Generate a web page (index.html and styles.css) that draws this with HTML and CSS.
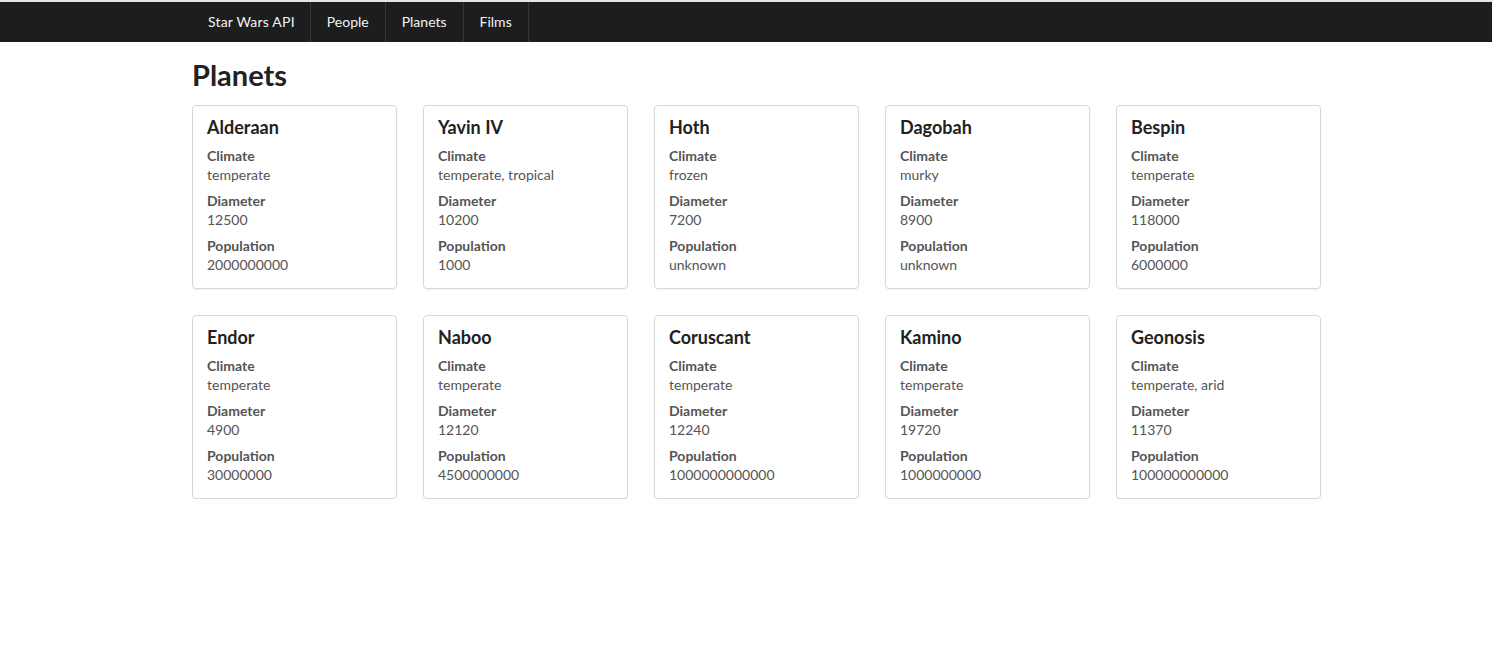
FILE: index.html
```html
<!DOCTYPE html>
<html>
<head>
<meta charset="utf-8">
<link rel="stylesheet" href="styles.css">
</head>
<body>
<nav class="navbar">
  <ul class="nav">
    <li class="brand">Star Wars API</li>
    <li>People</li>
    <li>Planets</li>
    <li>Films</li>
  </ul>
</nav>
<main class="page">
  <h1 class="title">Planets</h1>
  <div class="grid">
    <div class="card"><h3>Alderaan</h3><dl><dt>Climate</dt><dd>temperate</dd><dt>Diameter</dt><dd>12500</dd><dt>Population</dt><dd>2000000000</dd></dl></div>
    <div class="card"><h3>Yavin IV</h3><dl><dt>Climate</dt><dd>temperate, tropical</dd><dt>Diameter</dt><dd>10200</dd><dt>Population</dt><dd>1000</dd></dl></div>
    <div class="card"><h3>Hoth</h3><dl><dt>Climate</dt><dd>frozen</dd><dt>Diameter</dt><dd>7200</dd><dt>Population</dt><dd>unknown</dd></dl></div>
    <div class="card"><h3>Dagobah</h3><dl><dt>Climate</dt><dd>murky</dd><dt>Diameter</dt><dd>8900</dd><dt>Population</dt><dd>unknown</dd></dl></div>
    <div class="card"><h3>Bespin</h3><dl><dt>Climate</dt><dd>temperate</dd><dt>Diameter</dt><dd>118000</dd><dt>Population</dt><dd>6000000</dd></dl></div>
    <div class="card"><h3>Endor</h3><dl><dt>Climate</dt><dd>temperate</dd><dt>Diameter</dt><dd>4900</dd><dt>Population</dt><dd>30000000</dd></dl></div>
    <div class="card"><h3>Naboo</h3><dl><dt>Climate</dt><dd>temperate</dd><dt>Diameter</dt><dd>12120</dd><dt>Population</dt><dd>4500000000</dd></dl></div>
    <div class="card"><h3>Coruscant</h3><dl><dt>Climate</dt><dd>temperate</dd><dt>Diameter</dt><dd>12240</dd><dt>Population</dt><dd>1000000000000</dd></dl></div>
    <div class="card"><h3>Kamino</h3><dl><dt>Climate</dt><dd>temperate</dd><dt>Diameter</dt><dd>19720</dd><dt>Population</dt><dd>1000000000</dd></dl></div>
    <div class="card"><h3>Geonosis</h3><dl><dt>Climate</dt><dd>temperate, arid</dd><dt>Diameter</dt><dd>11370</dd><dt>Population</dt><dd>100000000000</dd></dl></div>
  </div>
</main>
</body>
</html>
```
FILE: styles.css
```css
html, body {
  margin: 0;
  padding: 0;
  background: #fff;
}
body {
  font-family: Lato, "Open Sans", sans-serif;
  font-size: 14px;
  color: #555;
  border-top: 2px solid #e4e4e4;
}
.navbar {
  background: #1c1d1f;
  height: 40px;
  margin-right: 1px;
  padding-left: 193px;
}
.nav {
  list-style: none;
  margin: 0;
  padding: 0;
  display: flex;
  height: 40px;
}
.nav li {
  color: #f2f2f2;
  font-size: 14px;
  line-height: 40px;
  padding: 0 16px;
  border-right: 1px solid #333436;
}
.nav li.brand {
  padding: 0 15px;
  letter-spacing: 0.2px;
}
.page {
  padding-left: 192px;
}
.title {
  margin: 0;
  padding-top: 16px;
  height: 47px;
  font-size: 29px;
  line-height: 34px;
  font-weight: 700;
  color: #222;
}
.grid {
  display: grid;
  grid-template-columns: repeat(5, 205px);
  column-gap: 26px;
  row-gap: 26px;
}
.card {
  border: 1px solid #d8d8d8;
  border-radius: 4px;
  box-shadow: 0 1px 2px rgba(0,0,0,0.06);
  padding: 9px 14px 12px;
  box-sizing: border-box;
  height: 184px;
}
.card h3 {
  margin: 0 0 7px;
  font-size: 18px;
  line-height: 24px;
  font-weight: 700;
  color: #222;
}
.card dl {
  margin: 0;
}
.card dt {
  font-weight: 700;
  line-height: 19px;
  color: #555;
}
.card dd {
  margin: 0 0 6px;
  line-height: 20px;
  color: #555;
}
```
